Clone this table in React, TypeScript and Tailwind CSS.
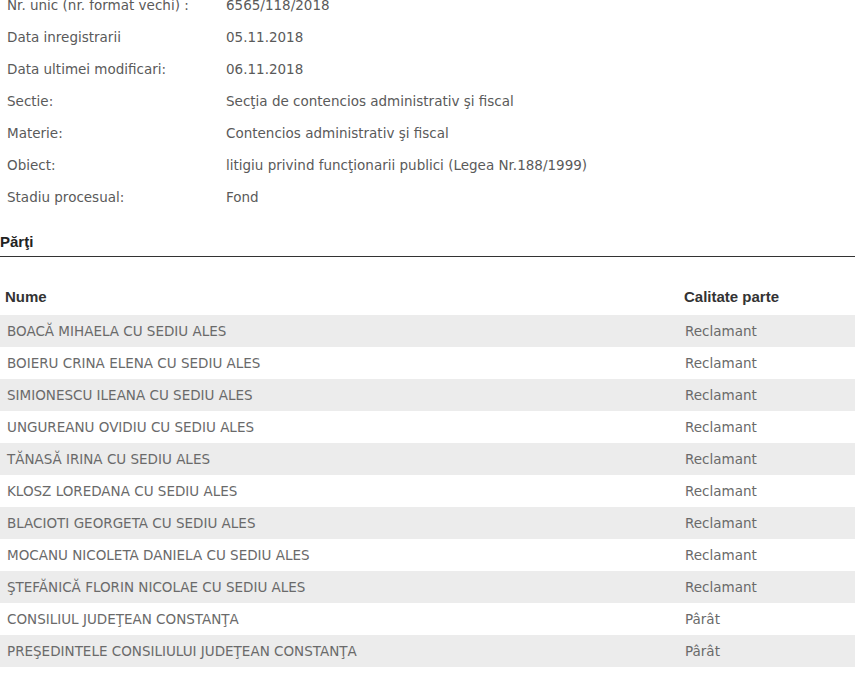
const details: [string, string][] = [
  ['Nr. unic (nr. format vechi) :', '6565/118/2018'],
  ['Data inregistrarii', '05.11.2018'],
  ['Data ultimei modificari:', '06.11.2018'],
  ['Sectie:', 'Secţia de contencios administrativ şi fiscal'],
  ['Materie:', 'Contencios administrativ şi fiscal'],
  ['Obiect:', 'litigiu privind funcţionarii publici (Legea Nr.188/1999)'],
  ['Stadiu procesual:', 'Fond'],
]

const parti: [string, string][] = [
  ['BOACĂ MIHAELA CU SEDIU ALES', 'Reclamant'],
  ['BOIERU CRINA ELENA CU SEDIU ALES', 'Reclamant'],
  ['SIMIONESCU ILEANA CU SEDIU ALES', 'Reclamant'],
  ['UNGUREANU OVIDIU CU SEDIU ALES', 'Reclamant'],
  ['TĂNASĂ IRINA CU SEDIU ALES', 'Reclamant'],
  ['KLOSZ LOREDANA CU SEDIU ALES', 'Reclamant'],
  ['BLACIOTI GEORGETA CU SEDIU ALES', 'Reclamant'],
  ['MOCANU NICOLETA DANIELA CU SEDIU ALES', 'Reclamant'],
  ['ŞTEFĂNICĂ FLORIN NICOLAE CU SEDIU ALES', 'Reclamant'],
  ['CONSILIUL JUDEŢEAN CONSTANŢA', 'Pârât'],
  ['PREŞEDINTELE CONSILIULUI JUDEŢEAN CONSTANŢA', 'Pârât'],
]

export default function App() {
  return (
    <div className="h-[682px] w-[855px] overflow-hidden bg-white font-['DejaVu_Sans',sans-serif] text-[13.5px] text-[#5a5a5a]">
      {/* Detalii dosar */}
      <div className="-mt-[11px]">
        {details.map(([label, value]) => (
          <div key={label} className="flex h-8 items-center">
            <div className="w-[226px] pl-[7px]">{label}</div>
            <div>{value}</div>
          </div>
        ))}
      </div>

      {/* Parti */}
      <h3 className="mt-[20px] border-b border-[#333] pb-[6px] font-['Liberation_Sans',Arial,sans-serif] text-[15px] font-bold leading-[17px] text-[#222]">
        Părţi
      </h3>
      <div className="mt-[22px] flex h-[36px] items-center font-['Liberation_Sans',Arial,sans-serif] text-[15px] font-bold text-[#333]">
        <div className="w-[684px] pl-[5px]">Nume</div>
        <div>Calitate parte</div>
      </div>
      <div>
        {parti.map(([nume, calitate], i) => (
          <div
            key={nume}
            className={`flex h-8 items-center text-[#6a6a6a] ${i % 2 === 0 ? 'bg-[#ececec]' : 'bg-white'}`}
          >
            <div className="w-[685px] pl-[7px]">{nume}</div>
            <div>{calitate}</div>
          </div>
        ))}
      </div>
    </div>
  )
}
